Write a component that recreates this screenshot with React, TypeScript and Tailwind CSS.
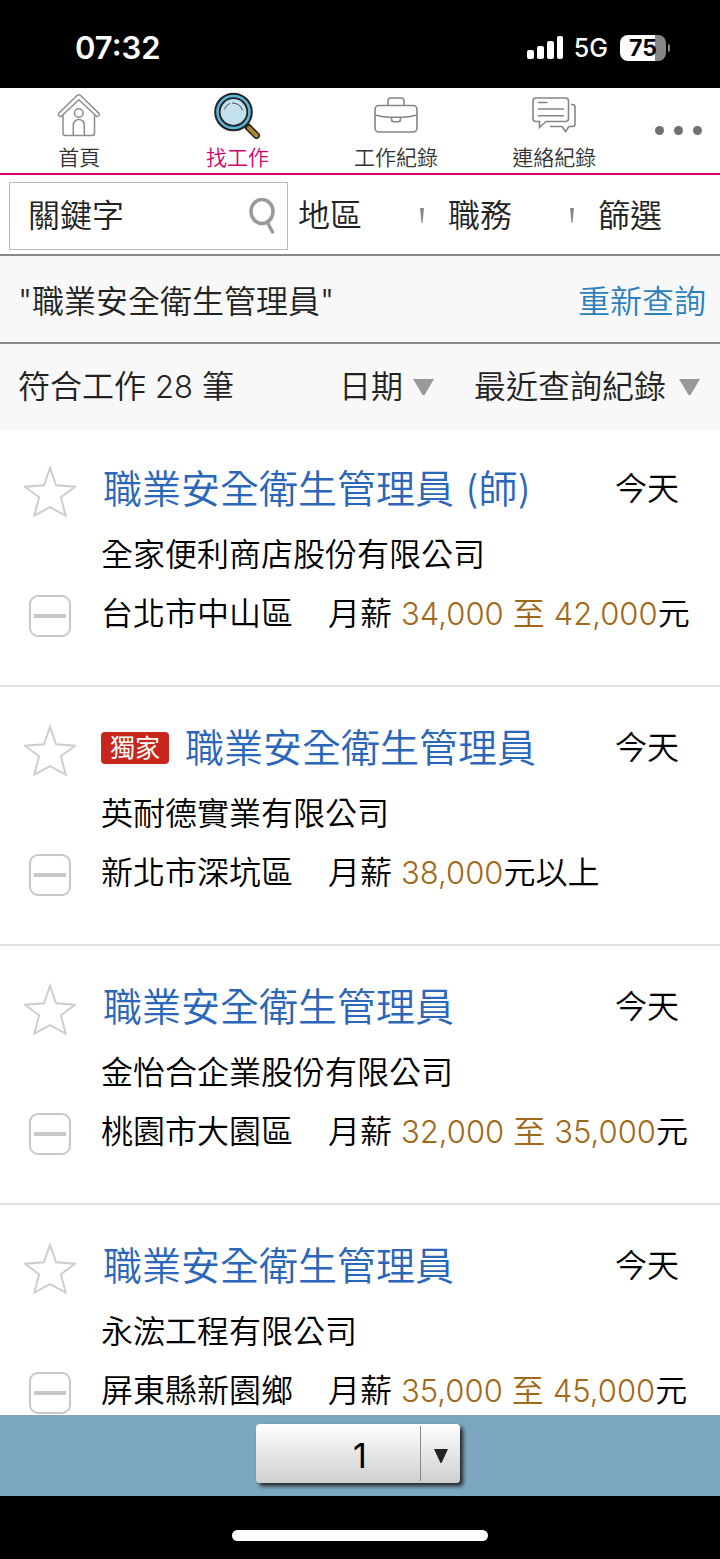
import type { ReactNode } from "react";

interface Job {
  id: number;
  title: string;
  company: string;
  area: string;
  exclusive?: boolean;
  salary: [string, string?];
}

const jobs: Job[] = [
  {
    id: 1,
    title: "職業安全衛生管理員 (師)",
    company: "全家便利商店股份有限公司",
    area: "台北市中山區",
    salary: ["34,000", "42,000"],
  },
  {
    id: 2,
    title: "職業安全衛生管理員",
    company: "英耐德實業有限公司",
    area: "新北市深坑區",
    exclusive: true,
    salary: ["38,000"],
  },
  {
    id: 3,
    title: "職業安全衛生管理員",
    company: "金怡合企業股份有限公司",
    area: "桃園市大園區",
    salary: ["32,000", "35,000"],
  },
  {
    id: 4,
    title: "職業安全衛生管理員",
    company: "永浤工程有限公司",
    area: "屏東縣新園鄉",
    salary: ["35,000", "45,000"],
  },
];

function StatusBar() {
  return (
    <div className="flex h-[88px] shrink-0 items-center justify-between bg-black pr-[50px] pb-2 pl-[75px] pt-4 text-white">
      <span className="text-[31px] leading-9 font-semibold">07:32</span>
      <div className="flex items-center">
        <svg width="37" height="24" viewBox="0 0 37 24" fill="#fff">
          <rect x="0" y="14" width="7" height="9" rx="2" />
          <rect x="10" y="10" width="7" height="13" rx="2" />
          <rect x="20" y="5" width="7" height="18" rx="2" />
          <rect x="30" y="0" width="6" height="23" rx="2" />
        </svg>
        <span className="ml-2.5 text-[25px] leading-8 font-medium">5G</span>
        <div className="ml-3 flex h-[26px] w-[46px] items-center justify-center rounded-lg bg-linear-to-r from-white from-75% to-[#868686] to-75% text-[23px] font-bold text-black">
          75
        </div>
        <span className="ml-0.5 h-2 w-0.5 rounded-r-full bg-[#868686]" />
      </div>
    </div>
  );
}

function HomeIcon() {
  return (
    <svg width="44" height="44" viewBox="0 0 44 44" fill="none" stroke="#8c8c8c" strokeWidth="1.5">
      <path d="M6 22v18q0 2.500 2.500 2.500h26.500q2.500 0 2.500-2.500V22" />
      <path d="M1.500 20.500 20 2.500q1.800-1.500 3.600 0l18.400 18q1 2.800-2.300 3L21.800 6.800 4 23.500q-3.500-.2-2.500-3z" />
      <circle cx="21.800" cy="20" r="4.300" />
      <path d="M16.300 42.500V32a5.500 5.500 0 0 1 11 0v10.500" />
    </svg>
  );
}

function FindIcon() {
  return (
    <svg width="47" height="47" viewBox="0 0 47 47" fill="none" strokeLinecap="round">
      <path d="M34 35 42.500 43.500" stroke="#222" strokeWidth="7" />
      <path d="M35 36 42.500 43.500" stroke="#a98535" strokeWidth="4" />
      <circle cx="19.500" cy="20" r="18.300" fill="#5bb4d8" stroke="#222" strokeWidth="2" />
      <circle cx="19.500" cy="20" r="13.800" fill="#c3e1ec" stroke="#222" strokeWidth="1.800" />
      <path d="M10.500 17q1.500-4 5-5.500M18.500 11q7.500 0 10 7" stroke="#444" strokeWidth="1" />
    </svg>
  );
}

function CaseIcon() {
  return (
    <svg width="44" height="36" viewBox="0 0 44 36" fill="none" stroke="#858585" strokeWidth="1.600">
      <rect x="1" y="8.500" width="42" height="26.500" rx="4" />
      <path d="M14 8.500V4q0-3 3-3h10q3 0 3 3v4.500M1 18q8 2.300 16 2.300h10q8 0 16-2.300" />
      <path d="M17.500 20.300v2q0 2.500 2.500 2.500h4q2.500 0 2.500-2.500v-2" />
    </svg>
  );
}

function ChatIcon() {
  return (
    <svg width="44" height="36" viewBox="0 0 44 36" fill="none" stroke="#858585" strokeWidth="1.600">
      <path d="M4 1h29.500q3 0 3 3v17.500q0 3-3 3H14L7.500 30.500v-6H4q-3 0-3-3V4q0-3 3-3z" />
      <path d="M6 5.500h9.500M6 12h26M6 18.800h26" />
      <path d="M39 7.500h1.500q2.500 0 2.500 2.500v17q0 2.500-2.500 2.500h-3.500l-3.500 5-3.500-5H18" />
    </svg>
  );
}

function Tab({ label, active, children }: { label: string; active?: boolean; children: ReactNode }) {
  return (
    <a href="#" className="flex w-[22%] flex-col items-center pt-[3px]">
      <span className="flex h-12 items-center">{children}</span>
      <span className={`mt-[5px] text-[21px] leading-7 ${active ? "text-[#d5006d]" : "text-[#333]"}`}>{label}</span>
    </a>
  );
}

function TabBar() {
  return (
    <nav className="flex h-[87px] shrink-0 border-b-2 border-[#d5006d] bg-white">
      <Tab label="首頁">
        <HomeIcon />
      </Tab>
      <Tab label="找工作" active>
        <FindIcon />
      </Tab>
      <Tab label="工作紀錄">
        <CaseIcon />
      </Tab>
      <Tab label="連絡紀錄">
        <ChatIcon />
      </Tab>
      <button aria-label="更多" className="flex flex-1 items-center justify-center gap-2.5 pl-1">
        <span className="size-[9px] rounded-full bg-[#707070]" />
        <span className="size-[9px] rounded-full bg-[#707070]" />
        <span className="size-[9px] rounded-full bg-[#707070]" />
      </button>
    </nav>
  );
}

function Tick() {
  return (
    <svg width="4" height="15" viewBox="0 0 4 15" fill="#888">
      <path d="M0 0h4L2.500 15h-1z" />
    </svg>
  );
}

function FilterBar() {
  return (
    <div className="flex h-[81px] shrink-0 items-center border-b-2 border-[#888] bg-white pt-0.5 pl-[9px] text-[#222]">
      <div className="relative w-[279px]">
        <input
          aria-label="關鍵字"
          placeholder="關鍵字"
          className="h-[68px] w-full border border-[#bbb] pr-14 pl-[18px] placeholder:text-[#222]"
        />
        <svg
          className="absolute top-4 right-3 size-[36px]"
          viewBox="0 0 36 36"
          fill="none"
          stroke="#9a9a9a"
          strokeWidth="3.500"
          strokeLinecap="round"
        >
          <ellipse cx="22" cy="13.500" rx="11" ry="12" />
          <path d="M28 25.500 32.500 34" />
        </svg>
      </div>
      <button className="ml-2.5 flex w-[150px] items-center justify-between pr-6">
        地區
        <Tick />
      </button>
      <button className="flex w-[150px] items-center justify-between pr-6">
        職務
        <Tick />
      </button>
      <button>篩選</button>
    </div>
  );
}

function DropDown({ label, className }: { label: string; className: string }) {
  return (
    <div className={`relative flex items-center ${className}`}>
      <select aria-label={label} className="w-full appearance-none bg-transparent">
        <option>{label}</option>
      </select>
      <svg
        className="pointer-events-none absolute right-0 h-4 w-[21px]"
        viewBox="0 0 21 16"
        fill="#999"
      >
        <path d="M0 0h21L11.500 16h-2z" />
      </svg>
    </div>
  );
}

function JobItem({ job }: { job: Job }) {
  const [from, to] = job.salary;
  return (
    <li className="flex border-t-2 border-[#e2e2e2] pt-[29px] pb-[46px] first:border-t-0 first:pt-[27px]">
      <div className="flex w-[101px] shrink-0 flex-col items-center pt-2 pr-px">
        <button aria-label="收藏" className="h-[52px]">
          <svg width="52" height="52" viewBox="0 0 54 54" fill="none" stroke="#ccc" strokeWidth="2">
            <path d="M27 3 33.300 21 53 22.500 38.300 33.500 43.300 52.500 27 43.800 10.700 52.500 15.700 33.500 1 22.500 20.700 21z" />
          </svg>
        </button>
        <button
          aria-label="隱藏"
          className="mt-[78px] flex size-[42px] items-center justify-center rounded-[9px] border-2 border-[#c8c8c8]"
        >
          <span className="h-1 w-8 bg-[#c8c8c8]" />
        </button>
      </div>
      <div className="min-w-0 flex-1">
        <div className="flex h-16 items-center justify-between pr-[41px]">
          <div className="flex items-center">
            {job.exclusive && (
              <span className="mr-3.5 rounded-sm bg-[#c8261c] px-[9px] text-[25px] leading-8 font-normal text-white">
                獨家
              </span>
            )}
            <a href="#" className="pl-0.5 text-[39px] leading-[64px] text-[#2a66b9]">
              {job.title}
            </a>
          </div>
          <span>今天</span>
        </div>
        <p className="leading-[68px]">{job.company}</p>
        <p className="flex leading-[50px] whitespace-pre">
          <span className="mr-[35px]">{job.area}</span>
          <span>
            月薪{" "}
            <span className="text-[#a0691a]">
              <span className="text-[31px]">{from}</span>
              {to && (
                <>
                  {" "}
                  至 <span className="text-[31px]">{to}</span>
                </>
              )}
            </span>
            {to ? "元" : "元以上"}
          </span>
        </p>
      </div>
    </li>
  );
}

function Pager() {
  return (
    <div className="flex h-[81px] shrink-0 items-center justify-center bg-[#7da7c1] pr-1 pb-1">
      <div className="relative h-[59px] w-[204px]">
        <select
          aria-label="頁數"
          className="size-full appearance-none rounded-sm bg-linear-to-b from-white to-[#cfcfcf] pt-1 pl-1 text-center text-[34px] font-normal text-black shadow-[3px_3px_4px_#222] [text-align-last:center]"
        >
          <option>1</option>
        </select>
        <span className="pointer-events-none absolute inset-y-0.5 right-[39px] w-px bg-[#888]" />
        <svg
          className="pointer-events-none absolute top-[25px] right-3 h-[14px] w-[14px]"
          viewBox="0 0 14 14"
          fill="#222"
        >
          <path d="M0 0h14L7.500 14h-1z" />
        </svg>
      </div>
    </div>
  );
}

export default function App() {
  return (
    <div className="flex h-screen flex-col bg-white font-['Inter','Noto_Sans_CJK_TC',sans-serif] text-[32px] leading-10 font-[350] text-black">
      <StatusBar />
      <TabBar />
      <FilterBar />
      <div className="flex h-[88px] shrink-0 items-center justify-between border-b-2 border-[#888] bg-[#f8f8f8] pr-3.5 pl-[18px] pt-1.5 text-[#222]">
        <h1>"職業安全衛生管理員"</h1>
        <a href="#" className="text-[#2a7fbf]">
          重新查詢
        </a>
      </div>
      <div className="flex h-[86px] shrink-0 items-center bg-[#f8f8f8] pr-5 pl-[18px] text-[#222]">
        <p>
          符合工作 <span className="text-[31px]">28</span> 筆
        </p>
        <DropDown label="日期" className="ml-auto w-[95px]" />
        <DropDown label="最近查詢紀錄" className="ml-10 w-[226px]" />
      </div>
      <ul className="min-h-0 flex-1 overflow-y-auto [scrollbar-width:none]">
        {jobs.map((job) => (
          <JobItem key={job.id} job={job} />
        ))}
      </ul>
      <Pager />
      <div className="flex h-[63px] shrink-0 items-center justify-center bg-black pt-4">
        <span className="h-[11px] w-64 rounded-full bg-white" />
      </div>
    </div>
  );
}
